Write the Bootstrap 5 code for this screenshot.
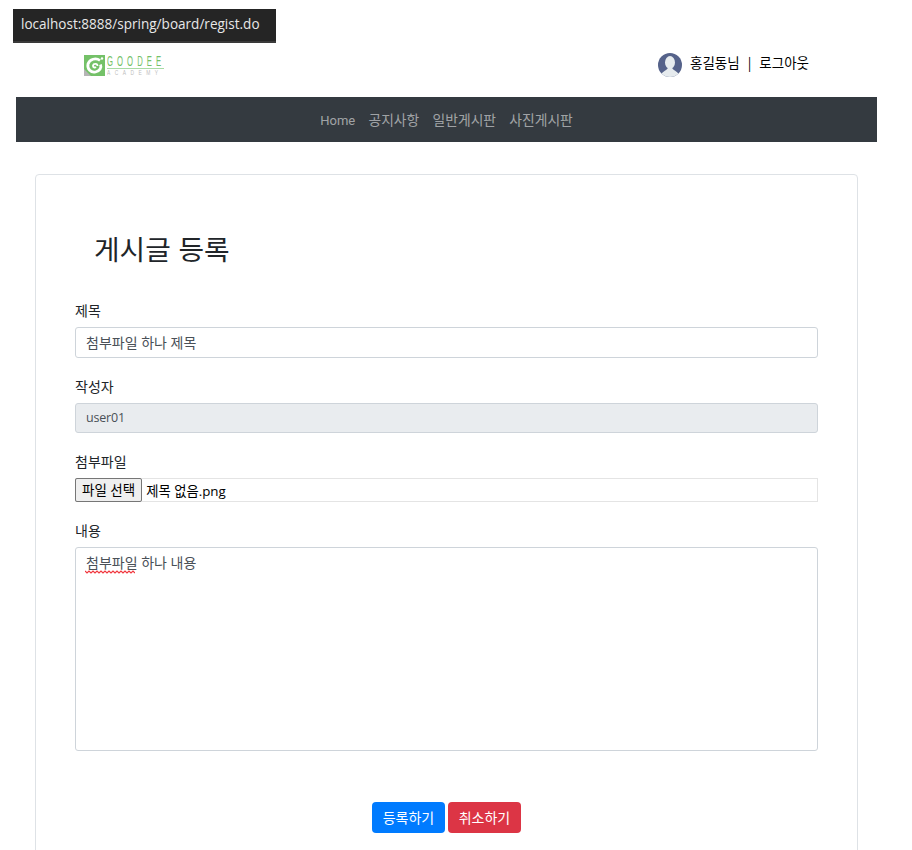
<!DOCTYPE html>
<html lang="ko">
<head>
<meta charset="utf-8">
<title>게시글 등록</title>
<link href="https://cdn.jsdelivr.net/npm/bootstrap@5.3.0/dist/css/bootstrap.min.css" rel="stylesheet">
<style>
html, body { height: 850px; overflow: hidden; }
body { font-family: "Open Sans", "Noto Sans CJK KR", sans-serif; font-size: 14px; color: #212529; background: #fff; position: relative; }
.url-tip { position: absolute; left: 13px; top: 9px; width: 263px; height: 34px; background: #252525; border-bottom: 2px solid #3a3a3a; color: #e8e8e8; font-size: 13.55px; line-height: 30px; padding-left: 8px; z-index: 5; white-space: nowrap; }
.page-wrap { width: 861px; margin-left: 16px; }
.top-head { height: 97px; padding: 55px 68px 0 68px; }
.logo-box { width: 80px; height: 21px; gap: 2px; }
.logo-words { font-family: "Liberation Sans", sans-serif; width: 57px; }
.logo-main { height: 14px; border-bottom: 1px solid #a7dba3; font-size: 14px; line-height: 13px; }
.logo-main span { display: inline-block; letter-spacing: 7.4px; color: #74c168; transform: scaleX(.55); transform-origin: left center; white-space: nowrap; }
.logo-sub { height: 7px; font-size: 7px; line-height: 7px; }
.logo-sub span { display: inline-block; letter-spacing: 6.4px; color: #bdbdbd; transform: scaleX(.7); transform-origin: left center; white-space: nowrap; }
.user-box { margin-top: -2px; color: #000; font-size: 13.5px; font-family: "Noto Sans CJK KR", sans-serif; }
.user-box svg { display: block; }
.user-box span { margin-top: -1px; }
.user-box .user-sep { margin: -1px 8px 0; }
.main-nav { height: 45px; background: #343a40; gap: 13.3px; font-size: 13.8px; padding-top: 2px; }
.main-nav a { color: rgba(255,255,255,.55); text-decoration: none; }
.main-nav .nav-latin { font-family: Roboto, sans-serif; font-size: 13px; }
.board-card { margin: 32px 19px 0; padding: 40px 39px; border: 1px solid #dee2e6; border-radius: 4px; height: 800px; }
.board-title { font-size: 27.8px; font-weight: 400; line-height: 1.2; margin: 17px 0 35px 19px; font-family: "Noto Sans CJK KR", sans-serif; }
.f-label { display: block; font-size: 14px; line-height: 21px; margin-bottom: 6px; }
.f-group { margin-bottom: 18px; }
.f-input { font-size: 14px; height: 31px; padding: 3px 10px 5px; border-radius: 3px; color: #495057; border-color: #ced4da; }
.f-input.is-locked { height: 30px; background: #e9ecef; font-size: 12.5px; letter-spacing: -.2px; }
.file-row { height: 24px; border: 1px solid #e4e4e4; font-size: 13.33px; color: #000; }
.file-row span { padding-top: 3px; }
.file-btn { height: 24px; padding: 0 6px; font-size: 13.5px; line-height: 20px; border: 1px solid #767676; border-radius: 2px; background: #efefef; color: #000; margin: -1px 4px 0 -1px; }
.note-wrap { position: relative; }
.note-area { height: 204px; padding: 4px 10px; font-size: 14px; border-radius: 3px; color: #495057; border-color: #ced4da; resize: none; }
.squiggle { position: absolute; left: 10px; top: 23px; }
.btn-row { gap: 3px; margin-top: 51px; }
.act-btn { width: 73px; height: 31px; padding: 0; font-size: 14px; border-radius: 4px; color: #fff; border: 0; }
.act-blue { background: #007bff; }
.act-red { background: #dc3545; }
</style>
</head>
<body>
<div class="url-tip">localhost:8888/spring/board/regist.do</div>
<div class="page-wrap">
  <header class="top-head d-flex justify-content-between align-items-start">
    <div class="logo-box d-flex align-items-stretch">
      <svg width="21" height="21" viewBox="0 0 21 21" aria-hidden="true">
        <rect width="21" height="21" fill="#74c168"/>
        <path d="M0 21V14L7 21Z" fill="#b5b5b5"/>
        <path d="M16 5.5C12 2.5 5.5 4 4 9C3 14 7 18 11.5 17C15.5 16 18 13 16.5 9.5" fill="none" stroke="#fff" stroke-width="2.8"/>
        <path d="M13.5 11C13.5 8.2 9.5 8.2 9 10.5C8.8 12.5 10.8 13 12 12" fill="none" stroke="#fff" stroke-width="1.8"/>
        <circle cx="18" cy="3.5" r="1.2" fill="#fff"/>
      </svg>
      <div class="logo-words">
        <div class="logo-main"><span>GOODEE</span></div>
        <div class="logo-sub"><span>ACADEMY</span></div>
      </div>
    </div>
    <div class="user-box d-flex align-items-start">
      <svg width="24" height="24" viewBox="0 0 24 24" class="me-2" aria-hidden="true">
        <defs><clipPath id="avatarClip"><circle cx="12" cy="12" r="12"/></clipPath></defs>
        <circle cx="12" cy="12" r="12" fill="#55628a"/>
        <g clip-path="url(#avatarClip)">
          <ellipse cx="12" cy="9.5" rx="5" ry="6.5" fill="#e6ebee"/>
          <path d="M2 25C2 19 8 18 10 15H14C16 18 22 19 22 25Z" fill="#e6ebee"/>
        </g>
      </svg>
      <span>홍길동님</span><span class="user-sep">|</span><span>로그아웃</span>
    </div>
  </header>
  <nav class="main-nav d-flex justify-content-center align-items-center">
    <a href="#" class="nav-latin">Home</a><a href="#">공지사항</a><a href="#">일반게시판</a><a href="#">사진게시판</a>
  </nav>
  <main class="board-card">
    <h2 class="board-title">게시글 등록</h2>
    <form>
      <div class="f-group">
        <label class="f-label">제목</label>
        <input class="form-control f-input" type="text" value="첨부파일 하나 제목">
      </div>
      <div class="f-group">
        <label class="f-label">작성자</label>
        <input class="form-control f-input is-locked" type="text" value="user01" readonly>
      </div>
      <div class="f-group">
        <label class="f-label">첨부파일</label>
        <div class="file-row d-flex align-items-center">
          <button type="button" class="file-btn">파일 선택</button><span>제목 없음.png</span>
        </div>
      </div>
      <div class="f-group">
        <label class="f-label">내용</label>
        <div class="note-wrap">
          <textarea class="form-control note-area" spellcheck="false">첨부파일 하나 내용</textarea>
          <svg class="squiggle" width="50" height="4" viewBox="0 0 50 4" aria-hidden="true">
            <path d="M0 1L2 3L4 1L6 3L8 1L10 3L12 1L14 3L16 1L18 3L20 1L22 3L24 1L26 3L28 1L30 3L32 1L34 3L36 1L38 3L40 1L42 3L44 1L46 3L48 1L50 3" fill="none" stroke="#f0383f" stroke-width="1.2"/>
          </svg>
        </div>
      </div>
      <div class="btn-row d-flex justify-content-center">
        <button type="button" class="btn act-btn act-blue">등록하기</button>
        <button type="button" class="btn act-btn act-red">취소하기</button>
      </div>
    </form>
  </main>
</div>
</body>
</html>
